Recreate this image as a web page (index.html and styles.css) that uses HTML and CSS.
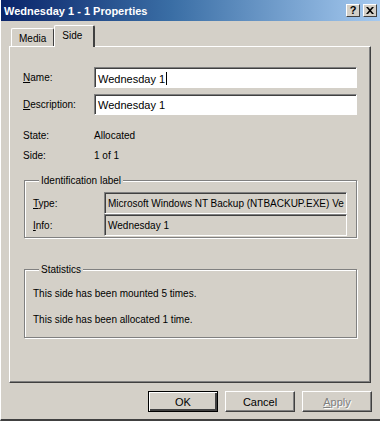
FILE: index.html
```html
<!DOCTYPE html>
<html lang="en">
<head>
    <meta charset="UTF-8">
    <title>Wednesday 1 - 1 Properties</title>
    <link rel="stylesheet" href="styles.css">
</head>
<body>
    <div class="window">
        <div class="titlebar">
            <span class="title">Wednesday 1 - 1 Properties</span>
            <div class="title-buttons">
                <span class="tbtn">?</span>
                <span class="tbtn close">
                    <svg width="8" height="7" viewBox="0 0 8 7"><path d="M0 0h2l2 2.2L6 0h2L5 3.5 8 7H6L4 4.8 2 7H0l3-3.5z" fill="#000"/></svg>
                </span>
            </div>
        </div>
        <div class="content">
            <div class="tabs">
                <div class="tab">Media</div>
                <div class="tab active">Side</div>
            </div>
            <div class="panel">
                <div class="form-row">
                    <label><u>N</u>ame:</label>
                    <div class="edit">Wednesday 1<span class="caret"></span></div>
                </div>
                <div class="form-row">
                    <label><u>D</u>escription:</label>
                    <div class="edit">Wednesday 1</div>
                </div>
                <div class="info-row first">
                    <span class="key">State:</span>
                    <span>Allocated</span>
                </div>
                <div class="info-row">
                    <span class="key">Side:</span>
                    <span>1 of 1</span>
                </div>

                <fieldset class="group ident">
                    <legend>Identification label</legend>
                    <div class="ro-row">
                        <label><u>T</u>ype:</label>
                        <div class="readonly">Microsoft Windows NT Backup (NTBACKUP.EXE) Ve</div>
                    </div>
                    <div class="ro-row">
                        <label><u>I</u>nfo:</label>
                        <div class="readonly">Wednesday 1</div>
                    </div>
                </fieldset>

                <fieldset class="group stats">
                    <legend>Statistics</legend>
                    <p>This side has been mounted 5 times.</p>
                    <p>This side has been allocated 1 time.</p>
                </fieldset>
            </div>
        </div>
        <div class="buttons">
            <button class="default">OK</button>
            <button>Cancel</button>
            <button disabled><u>A</u>pply</button>
        </div>
    </div>
</body>
</html>
```

FILE: styles.css
```css
body {
    margin: 0;
    font-family: "Liberation Sans", Arial, sans-serif;
    font-size: 10px;
    color: #000;
    background-color: #d4d0c8;
}
.window {
    width: 380px;
    height: 421px;
    box-sizing: border-box;
    background-color: #d4d0c8;
    border-left: 1px solid #fff;
    border-bottom: 2px solid #404040;
}
.titlebar {
    height: 21px;
    display: flex;
    align-items: center;
    justify-content: space-between;
    padding: 0 3px 0 3px;
    background: linear-gradient(to right, #0a246a 0%, #3a6ea5 45%, #a6caf0 100%);
}
.title {
    color: #fff;
    font-weight: bold;
    font-size: 11px;
}
.title-buttons {
    display: flex;
    gap: 2px;
}
.tbtn {
    width: 14px;
    height: 13px;
    box-sizing: border-box;
    display: flex;
    align-items: center;
    justify-content: center;
    background-color: #d4d0c8;
    border: 1px solid;
    border-color: #fff #404040 #404040 #fff;
    font-weight: bold;
    font-size: 11px;
    line-height: 1;
}
.close {
    margin-left: 1px;
}
.content {
    padding: 4px 9px 0 8px;
}
.tabs {
    display: flex;
    align-items: flex-end;
    height: 21px;
    padding-left: 2px;
}
.tab {
    height: 18px;
    box-sizing: border-box;
    padding: 4px 7px 0 7px;
    border: 1px solid;
    border-color: #fff #404040 transparent #fff;
    border-bottom: none;
    border-radius: 2px 2px 0 0;
    position: relative;
    z-index: 1;
}
.tab.active {
    height: 22px;
    padding: 4px 11px 0 7px;
    background-color: #d4d0c8;
    border-right-width: 2px;
    margin-bottom: -1px;
    z-index: 2;
}
.panel {
    height: 337px;
    box-sizing: border-box;
    border: 1px solid;
    border-color: #fff #404040 #404040 #fff;
    box-shadow: inset -1px -1px #808080;
    padding: 20px 13px 0 13px;
}
.form-row {
    display: grid;
    grid-template-columns: 71px 1fr;
    align-items: center;
    margin-bottom: 6px;
}
.edit {
    height: 21px;
    box-sizing: border-box;
    background-color: #fff;
    border: 1px solid;
    border-color: #808080 #fff #fff #808080;
    box-shadow: inset 1px 1px #404040;
    padding: 4px 3px 0 3px;
    white-space: nowrap;
    font-size: 11px;
}
.caret {
    display: inline-block;
    width: 1px;
    height: 13px;
    background-color: #000;
    vertical-align: -2px;
    margin-left: 1px;
}
.info-row {
    display: grid;
    grid-template-columns: 71px 1fr;
    height: 20px;
    align-items: center;
}
.info-row.first {
    margin-top: 10px;
}
.group {
    margin: 0 0 0 1px;
    padding: 0;
    border: 1px solid #808080;
    box-shadow: inset 1px 1px #fff, 1px 1px #fff;
}
.group legend {
    margin-left: 6px;
    padding: 0 2px;
    background-color: #d4d0c8;
}
.ident {
    margin-top: 10px;
    height: 63px;
    box-sizing: border-box;
    padding: 6px 9px 0 8px;
}
.ro-row {
    display: grid;
    grid-template-columns: 71px 1fr;
    align-items: center;
}
.readonly {
    height: 22px;
    box-sizing: border-box;
    border: 1px solid;
    border-color: #808080 #fff #fff #808080;
    box-shadow: inset 1px 1px #404040;
    padding: 5px 3px 0 3px;
    white-space: nowrap;
    overflow: hidden;
}
.stats {
    margin-top: 26px;
    height: 74px;
    box-sizing: border-box;
    padding: 13px 8px 0 8px;
}
.stats p {
    margin: 0 0 15px 0;
}
.buttons {
    display: flex;
    justify-content: flex-end;
    gap: 7px;
    padding: 8px 8px 0 0;
}
button {
    width: 70px;
    height: 21px;
    box-sizing: border-box;
    font-family: "Liberation Sans", Arial, sans-serif;
    font-size: 11px;
    background-color: #d4d0c8;
    border: 1px solid;
    border-color: #fff #404040 #404040 #fff;
    box-shadow: inset -1px -1px #808080;
    padding: 0;
    color: #000;
}
button.default {
    border: 1px solid #000;
    box-shadow: inset 1px 1px #fff, inset -2px -2px #404040;
}
button:disabled {
    color: #808080;
    text-shadow: 1px 1px #fff;
}
```
